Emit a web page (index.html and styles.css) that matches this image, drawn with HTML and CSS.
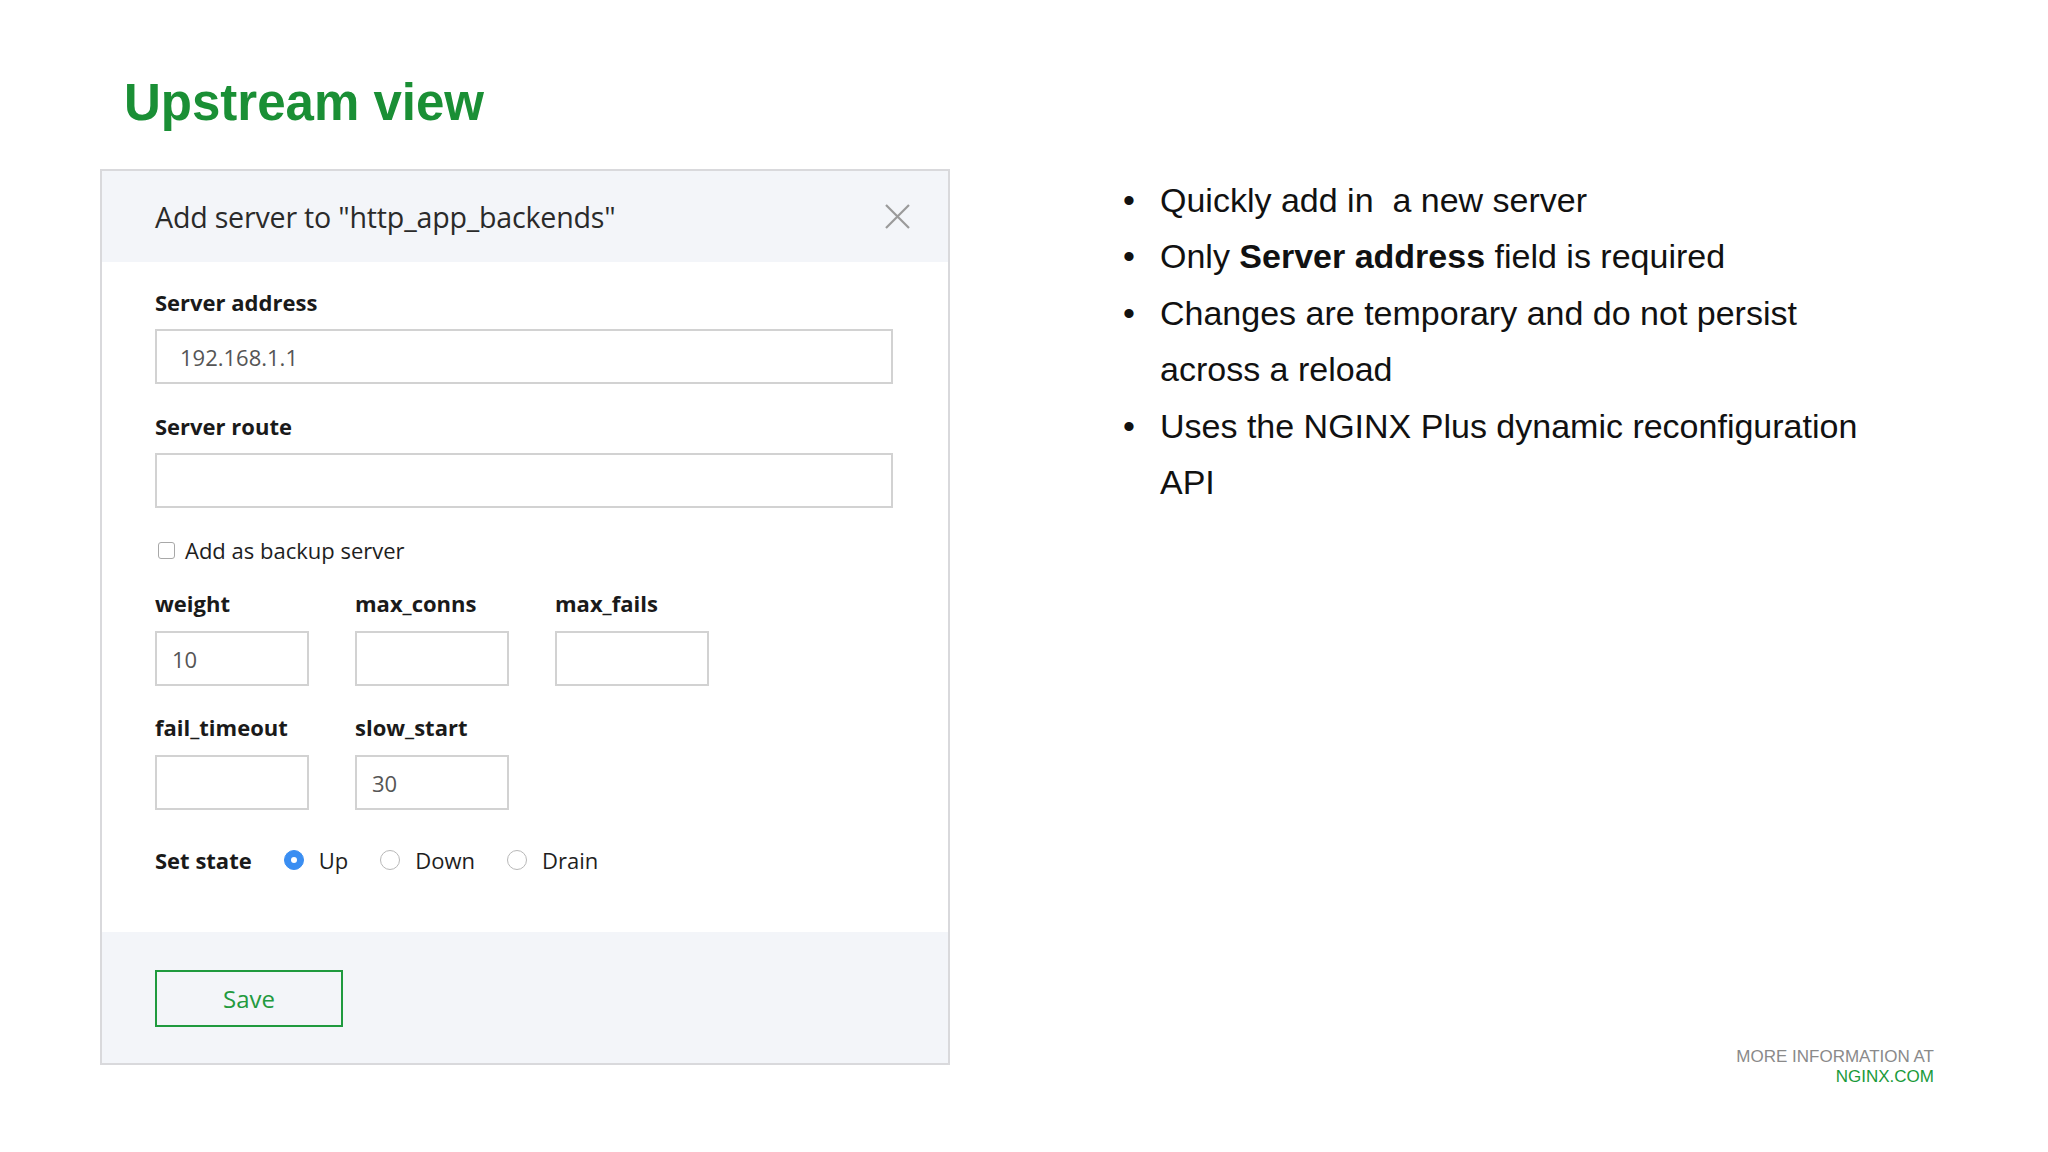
FILE: index.html
```html
<!DOCTYPE html>
<html>
<head>
<meta charset="utf-8">
<link rel="stylesheet" href="styles.css">
</head>
<body>
<div class="slide">
  <h1 class="title">Upstream view</h1>
  <div class="main">
    <div class="dialog">
      <div class="dlg-head">
        <div class="dlg-title">Add server to "http_app_backends"</div>
        <svg class="close" width="25" height="25" viewBox="0 0 25 25"><path d="M1 1 L24 24 M24 1 L1 24" stroke="#9a9a9a" stroke-width="2.2" fill="none"/></svg>
      </div>
      <div class="dlg-body">
        <div class="label">Server address</div>
        <div class="field wide pad-l">192.168.1.1</div>
        <div class="label gap-top">Server route</div>
        <div class="field wide"></div>
        <div class="check-row">
          <span class="checkbox"></span>
          <span class="check-text">Add as backup server</span>
        </div>
        <div class="grid grid-1">
          <div class="label">weight</div>
          <div class="label">max_conns</div>
          <div class="label">max_fails</div>
          <div class="field small">10</div>
          <div class="field small"></div>
          <div class="field small"></div>
        </div>
        <div class="grid grid-2">
          <div class="label">fail_timeout</div>
          <div class="label">slow_start</div>
          <div></div>
          <div class="field small"></div>
          <div class="field small">30</div>
          <div></div>
        </div>
        <div class="state-row">
          <span class="label state-label">Set state</span>
          <span class="radio on"></span><span class="radio-text">Up</span>
          <span class="radio"></span><span class="radio-text">Down</span>
          <span class="radio"></span><span class="radio-text">Drain</span>
        </div>
      </div>
      <div class="dlg-foot">
        <div class="save">Save</div>
      </div>
    </div>
    <ul class="bullets">
      <li>Quickly add in&nbsp; a new server</li>
      <li>Only <b>Server address</b> field is required</li>
      <li>Changes are temporary and do not persist across a reload</li>
      <li>Uses the NGINX Plus dynamic reconfiguration API</li>
    </ul>
  </div>
  <div class="more">
    <div class="more-top">MORE INFORMATION AT</div>
    <div class="more-link">NGINX.COM</div>
  </div>
</div>
</body>
</html>
```
FILE: styles.css
```css
html, body {
  margin: 0;
  padding: 0;
  background: #ffffff;
}
.slide {
  width: 2048px;
  height: 1152px;
  box-sizing: border-box;
  padding-top: 73px;
  position: relative;
  font-family: "Liberation Sans", Arial, sans-serif;
  display: flex;
  flex-direction: column;
}
.title {
  margin: 0 0 0 124px;
  font-size: 51px;
  line-height: 60px;
  font-weight: bold;
  color: #1a8f35;
}
.main {
  margin-top: 36px;
  display: flex;
  align-items: flex-start;
}
.dialog {
  margin-left: 100px;
  width: 850px;
  box-sizing: border-box;
  border: 2px solid #d9d9dc;
  font-family: "Open Sans", "DejaVu Sans", sans-serif;
  color: #1e1e1e;
  background: #fff;
}
.dlg-head {
  height: 91px;
  background: #f3f5f9;
  display: flex;
  align-items: center;
  justify-content: space-between;
  padding: 0 38px 0 53px;
}
.dlg-title {
  font-size: 28.6px;
  color: #2a2a2a;
  letter-spacing: -0.2px;
}
.close {
  display: block;
  margin-top: 0;
}
.dlg-body {
  padding: 25px 55px 57px 53px;
}
.label {
  font-size: 22px;
  line-height: 30px;
  font-weight: 700;
  color: #1a1a1a;
}
.field {
  box-sizing: border-box;
  height: 55px;
  border: 2px solid #d2d2d2;
  background: #fff;
  font-size: 22px;
  color: #555;
  display: flex;
  align-items: center;
  padding-left: 15px;
}
.field.wide {
  width: 738px;
  margin-top: 12px;
}
.field.pad-l {
  padding-left: 23px;
}
.label.gap-top {
  margin-top: 27px;
}
.check-row {
  margin-top: 27px;
  height: 30px;
  display: flex;
  align-items: center;
}
.checkbox {
  width: 15px;
  height: 15px;
  border: 1.5px solid #a8a8a8;
  border-radius: 3px;
  margin-left: 3px;
  background: #fff;
}
.check-text {
  margin-left: 10px;
  font-size: 22px;
  color: #1e1e1e;
}
.grid {
  display: grid;
  grid-template-columns: 154px 154px 154px;
  column-gap: 46px;
  row-gap: 13px;
}
.grid-1 {
  margin-top: 23px;
}
.grid-2 {
  margin-top: 26px;
}
.field.small {
  width: 154px;
  padding-left: 15px;
}
.state-row {
  margin-top: 35px;
  height: 30px;
  display: flex;
  align-items: center;
}
.state-label {
  margin-right: 32px;
}
.radio {
  box-sizing: border-box;
  width: 20px;
  height: 20px;
  border-radius: 50%;
  border: 1.5px solid #b8b8b8;
  background: #fff;
  position: relative;
}
.radio.on {
  background: #3a8ef2;
  border-color: #3a8ef2;
}
.radio.on::after {
  content: "";
  position: absolute;
  left: 50%;
  top: 50%;
  width: 6px;
  height: 6px;
  margin: -3px 0 0 -3px;
  border-radius: 50%;
  background: #fff;
}
.radio-text {
  font-size: 22px;
  margin-left: 15px;
  margin-right: 32px;
  color: #1e1e1e;
}
.dlg-foot {
  background: #f3f5f9;
  padding: 38px 53px 36px;
}
.save {
  box-sizing: border-box;
  width: 188px;
  height: 57px;
  border: 2px solid #1f9a3e;
  color: #229a3e;
  font-size: 24px;
  display: flex;
  align-items: center;
  justify-content: center;
}
.bullets {
  margin: 3px 0 0 173px;
  padding: 0;
  list-style: none;
  width: 760px;
  font-size: 34px;
  line-height: 56.4px;
  color: #111;
}
.bullets li {
  position: relative;
  padding-left: 37px;
}
.bullets li::before {
  content: "•";
  position: absolute;
  left: 0;
  top: 0;
}
.more {
  position: absolute;
  right: 114px;
  top: 1047px;
  text-align: right;
  font-size: 17px;
  line-height: 20px;
}
.more-top {
  color: #8a8a8a;
}
.more-link {
  color: #1a9a3a;
}
```
